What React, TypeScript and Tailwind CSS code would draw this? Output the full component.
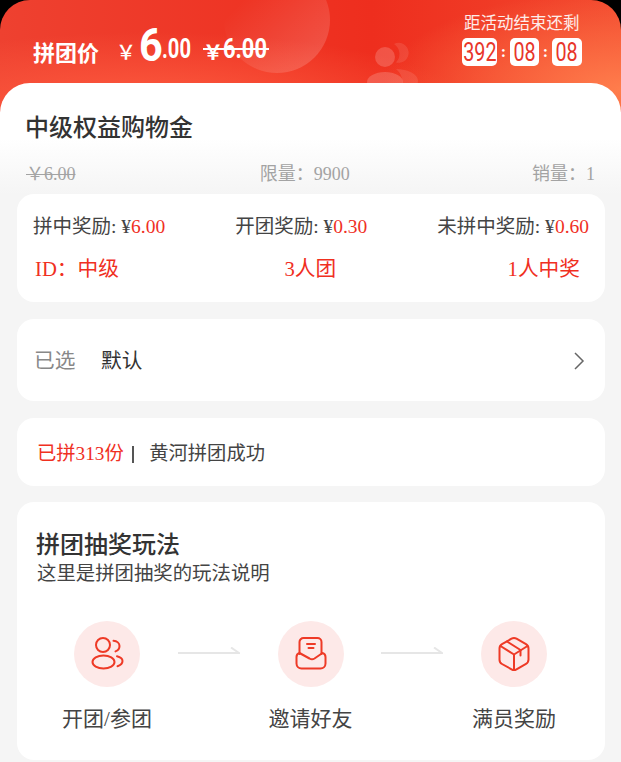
const serif = "font-['Liberation_Serif','Noto_Sans_CJK_SC',serif]";
const bigYen = "\uFFE5";

function UsersIcon() {
  return (
    <svg width="36" height="36" viewBox="0 0 36 36" fill="none" stroke="#ee3a26" strokeWidth="2" strokeLinecap="round">
      <circle cx="14" cy="9" r="7" />
      <ellipse cx="14.500" cy="26" rx="11" ry="6.500" />
      <path d="M24.500 4.800c3.500.3 6 2.500 6 5.200 0 2.500-1.500 4.500-4 5.400" />
      <path d="M28 20.200c3.500.8 5.500 2.800 5.500 4.800 0 2.300-2 4.200-5 5.200" />
    </svg>
  );
}

function MailIcon() {
  return (
    <svg width="36" height="36" viewBox="0 0 36 36" fill="none" stroke="#ee3a26" strokeWidth="2" strokeLinecap="round" strokeLinejoin="round">
      <path d="M6.500 18V6a4 4 0 0 1 4-4h14a4 4 0 0 1 4 4v12" />
      <path d="M14 8h8M15.500 12h5" />
      <path d="M6.500 17C4.500 17.500 3.500 19 3.500 21v6.500a5 5 0 0 0 5 5h19a5 5 0 0 0 5-5V21c0-2-1-3.500-3-4l-8 5.500c-2 1.200-3 1.200-5 0z" />
    </svg>
  );
}

function BoxIcon() {
  return (
    <svg width="36" height="36" viewBox="0 0 36 36" fill="none" stroke="#ee3a26" strokeWidth="2" strokeLinecap="round" strokeLinejoin="round">
      <path d="M15.500 2.700a5 5 0 0 1 5 0l9.500 5.500a5 5 0 0 1 2.500 4.300v11a5 5 0 0 1-2.500 4.300l-9.500 5.500a5 5 0 0 1-5 0L6 28a5 5 0 0 1-2.500-4.500v-11A5 5 0 0 1 6 8.200z" />
      <path d="M4.500 10L18 18.500 31.500 10M18 18.500V33.500" />
      <path d="M11 5.500l13.500 8.500v5.500" />
    </svg>
  );
}

function Arrow() {
  return (
    <svg width="62" height="10" viewBox="0 0 62 10" fill="none" stroke="#e6e6e6" strokeWidth="2" className="mt-[26px]">
      <path d="M0 6h61L53 .5" />
    </svg>
  );
}

function TimeBox({ value, width }: { value: string; width: string }) {
  return (
    <div className={`flex h-[28px] items-center justify-center rounded-[5px] bg-white ${width}`}>
      <span className="inline-block scale-x-[0.76] font-['Roboto',sans-serif] text-[26px] leading-none text-[#e8362a]">
        {value}
      </span>
    </div>
  );
}

function Reward({ label, amount }: { label: string; amount: string }) {
  return (
    <span className="text-[#444]">
      {label}: ¥<span className="text-[#f0301f]">{amount}</span>
    </span>
  );
}

const steps = [
  { label: "开团/参团", icon: <UsersIcon /> },
  { label: "邀请好友", icon: <MailIcon /> },
  { label: "满员奖励", icon: <BoxIcon /> },
];

export default function App() {
  return (
    <div className={`h-[762px] w-[621px] overflow-hidden bg-[#f5f5f5] ${serif}`}>
      <div className="bg-black">
        <div className="relative h-[112px] overflow-hidden rounded-t-[30px] bg-[radial-gradient(ellipse_240px_100px_at_100%_80%,#ff7d4c_0%,rgba(255,125,76,0)_100%),radial-gradient(ellipse_330px_80px_at_24%_100%,#ff5f42_0%,rgba(255,95,66,0)_100%),linear-gradient(90deg,#ee4130,#ee2e1e_60%,#f2482e)]">
          <div className="absolute left-[224px] top-[-33px] h-[106px] w-[106px] rounded-full bg-gradient-to-br from-white/0 from-25% to-white/20" />
          <svg width="60" height="50" viewBox="0 0 60 50" className="absolute left-[360px] top-[38px]" fill="#fff">
            <path d="M34 6a10 10 0 1 1 2 18.500A12 12 0 0 0 34 6z" opacity="0.1" />
            <path d="M36 31c12 0 22 5 22 12s-8 7-16 7c2-8-1-15-6-19z" opacity="0.1" />
            <circle cx="25" cy="19" r="10" opacity="0.18" />
            <ellipse cx="25" cy="44" rx="18" ry="10" opacity="0.18" />
          </svg>
          <span className="absolute left-[33px] top-[35px] font-['Noto_Sans_CJK_SC',sans-serif] text-[22px] leading-[32px] font-bold text-white">拼团价</span>
          <div className="absolute left-[116px] top-[23px] flex h-[44px] items-end font-['Roboto',sans-serif] font-medium text-white">
            <span className="w-[23px] font-['Noto_Sans_CJK_SC',sans-serif] text-[20px] leading-[30px]">{bigYen}</span>
            <span className="w-[23px] origin-left scale-x-[0.9] font-bold text-[46px] leading-[44px]">6</span>
            <span className="w-[41px] origin-left scale-x-[0.72] font-bold text-[28px] leading-[37px]">.00</span>
            <span className="relative w-[66px] whitespace-nowrap font-bold">
              <span className="flex h-[36px] items-end">
                <span className="w-[22px] font-['Noto_Sans_CJK_SC',sans-serif] text-[20px] leading-[30px]">{bigYen}</span>
                <span className="origin-left scale-x-[0.78] text-[28px] leading-[37px]">6.00</span>
              </span>
              <span className="absolute left-0 right-0 top-[17px] h-[2px] bg-white" />
            </span>
          </div>
          <div className="absolute left-[462px] top-[11px] w-[120px]">
            <div className="ml-[2px] whitespace-nowrap font-['Noto_Sans_CJK_SC',sans-serif] text-[16.500px] leading-[22px] text-white/90">距活动结束还剩</div>
            <div className="mt-[5px] flex items-center justify-between text-white">
              <TimeBox value="392" width="w-[35px]" />
              <span className="font-bold text-[16px] leading-none">:</span>
              <TimeBox value="08" width="w-[29px]" />
              <span className="font-bold text-[16px] leading-none">:</span>
              <TimeBox value="08" width="w-[30px]" />
            </div>
          </div>
        </div>
      </div>

      <div className="relative -mt-[29px] h-[111px] rounded-t-[30px] bg-gradient-to-b from-white from-50% to-[#f5f5f5] px-[26px] pt-[25px]">
        <h1 className="-ml-[1px] font-['Noto_Sans_CJK_SC',sans-serif] text-[24px] font-medium leading-[36px] text-[#333]">中级权益购物金</h1>
        <div className="mt-[17px] flex items-center justify-between text-[18px] leading-[26px] text-[#a3a3a3]">
          <span className="line-through">{bigYen}6.00</span>
          <span className="ml-[2px]">限量：9900</span>
          <span>销量：1</span>
        </div>
      </div>

      <div className="flex flex-col gap-[17px] pl-[17px] pr-[16px]">
        <div className="h-[108px] rounded-[17px] bg-white px-[16px] pt-[19px] text-[19.500px]">
          <div className="flex justify-between leading-[28px]">
            <Reward label="拼中奖励" amount="6.00" />
            <Reward label="开团奖励" amount="0.30" />
            <Reward label="未拼中奖励" amount="0.60" />
          </div>
          <div className="mt-[14px] flex justify-between pl-[2px] pr-[9px] text-[20.700px] leading-[28px] text-[#f0301f]">
            <span>ID：中级</span>
            <span className="-ml-[6px]">3人团</span>
            <span>1人中奖</span>
          </div>
        </div>

        <div className="flex h-[82px] items-center rounded-[17px] bg-white pl-[17px] pr-[20px] pt-[4px] text-[20.700px]">
          <span className="w-[67px] text-[#888]">已选</span>
          <span className="text-[#333]">默认</span>
          <svg width="12" height="18" viewBox="0 0 12 18" fill="none" stroke="#666" strokeWidth="1.500" className="ml-auto -mt-[2px]">
            <path d="M2 1l8 8-8 8" />
          </svg>
        </div>

        <div className="flex h-[68px] items-center rounded-[17px] bg-white pl-[20px] pt-[4px] text-[19.300px]">
          <span className="text-[#f0301f]">已拼313份</span>
          <span className="ml-[8px] mr-[15.500px] h-[17px] w-[2px] bg-[#555]" />
          <span className="text-[#444]">黄河拼团成功</span>
        </div>

        <div className="-mt-[1px] h-[258px] rounded-[17px] bg-white px-[20px] pt-[23px]">
          <h2 className="-ml-[1px] font-['Noto_Sans_CJK_SC',sans-serif] text-[24px] font-medium leading-[36px] text-[#333]">拼团抽奖玩法</h2>
          <p className="mt-[1px] text-[19.400px] leading-[24px] text-[#444]">这里是拼团抽奖的玩法说明</p>
          <div className="mt-[35px] flex justify-between pl-[37px] pr-[38px]">
            {steps.map((step, i) => (
              <div key={step.label} className="contents">
                {i > 0 && <Arrow />}
                <div className="flex w-[66px] flex-col items-center">
                  <div className="flex h-[66px] w-[66px] items-center justify-center rounded-full bg-[#fde9e8]">
                    {step.icon}
                  </div>
                  <span className="mt-[18px] whitespace-nowrap text-[21px] leading-[28px] text-[#444]">{step.label}</span>
                </div>
              </div>
            ))}
          </div>
        </div>
      </div>
    </div>
  );
}
